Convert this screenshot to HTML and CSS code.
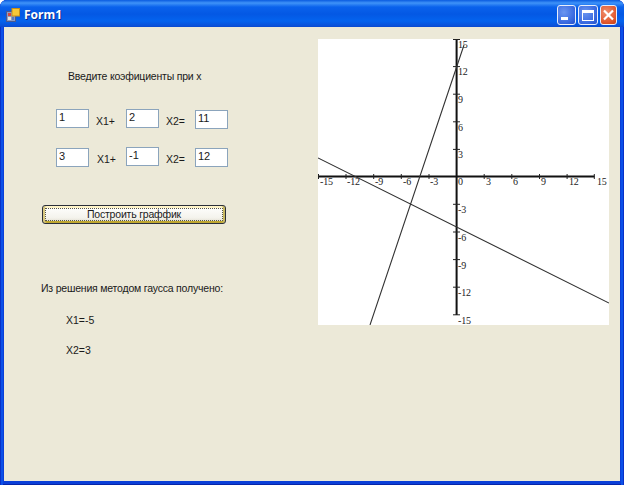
FILE: index.html
```html
<!DOCTYPE html>
<html lang="ru">
<head>
<meta charset="utf-8">
<title>Form1</title>
<link rel="stylesheet" href="styles.css">
</head>
<body>
<div class="window">
  <header class="titlebar">
    <svg class="app-icon" width="14" height="14" viewBox="0 0 14 14">
      <rect x="0.5" y="3.5" width="9" height="10" fill="#8c9cc4" stroke="#4a5a90"/>
      <rect x="2" y="5" width="3" height="3" fill="#d8463a"/>
      <rect x="2" y="9" width="3" height="3" fill="#e8e4d8"/>
      <rect x="6" y="9" width="2" height="3" fill="#5a7ac0"/>
      <rect x="6" y="0.5" width="7.5" height="7.5" fill="#f8c838" stroke="#c89018"/>
    </svg>
    <span class="title">Form1</span>
    <div class="caption-buttons">
      <button class="cap cap-min" aria-label="Свернуть">
        <svg width="19" height="20" viewBox="0 0 19 20"><rect x="4" y="12" width="7" height="3" fill="#fff"/></svg>
      </button>
      <button class="cap cap-max" aria-label="Развернуть">
        <svg width="20" height="20" viewBox="0 0 20 20"><rect x="4.5" y="5.5" width="11" height="10" fill="none" stroke="#fff"/><rect x="4" y="5" width="12" height="3" fill="#fff"/></svg>
      </button>
      <button class="cap cap-red" aria-label="Закрыть">
        <svg width="17" height="20" viewBox="0 0 17 20"><path d="M4 5.5 13 14.5M13 5.5 4 14.5" stroke="#fff" stroke-width="2.2" fill="none"/></svg>
      </button>
    </div>
  </header>
  <main class="client">
    <section class="form-pane">
      <p class="text prompt">Введите коэфициенты при х</p>
      <div class="eq eq-first">
        <input class="num" value="1" aria-label="a11">
        <span class="text term">X1+</span>
        <input class="num" value="2" aria-label="a12">
        <span class="text term">X2=</span>
        <input class="num nudge" value="11" aria-label="b1">
      </div>
      <div class="eq eq-second">
        <input class="num nudge" value="3" aria-label="a21">
        <span class="text term term-shift">X1+</span>
        <input class="num" value="-1" aria-label="a22">
        <span class="text term">X2=</span>
        <input class="num nudge" value="12" aria-label="b2">
      </div>
      <button class="plot"><span class="plot-inner">Построить граффик</span></button>
      <p class="text result-head">Из решения методом гаусса получено:</p>
      <p class="text root root-a">X1=-5</p>
      <p class="text root root-b">X2=3</p>
    </section>
    <svg class="chart" width="291" height="286" viewBox="318 39 291 286">
      <rect x="318" y="39" width="291" height="286" fill="#fff"/>
      <g class="axes">
        <path class="axis" d="M318 176.5H594.5M456.6 39V315"/>
        <path class="tick" d="M318.5 174V179M346 174V179M373.7 174V179M401.3 174V179M429 174V179M484.2 174V179M511.8 174V179M539.5 174V179M567.1 174V179M594.3 174V179"/>
        <path class="tick" d="M453 39.5H460M453 66.6H460M453 94.2H460M453 121.8H460M453 149.4H460M453 204.3H460M453 232H460M453 259.6H460M453 287.2H460M453 314.8H460"/>
      </g>
      <path class="plot-line" d="M370 325 464 45M318 158 609 303"/>
      <g class="labels">
        <text x="320" y="185">-15</text><text x="347" y="185">-12</text><text x="375" y="185">-9</text>
        <text x="403" y="185">-6</text><text x="430" y="185">-3</text><text x="458" y="185">0</text>
        <text x="486" y="185">3</text><text x="513" y="185">6</text><text x="541" y="185">9</text>
        <text x="569" y="185">12</text><text x="597" y="185">15</text>
        <text x="458" y="48">15</text><text x="458" y="75">12</text><text x="458" y="103">9</text>
        <text x="458" y="131">6</text><text x="458" y="158">3</text>
        <text x="458" y="213">-3</text><text x="458" y="241">-6</text><text x="458" y="269">-9</text>
        <text x="458" y="296">-12</text><text x="458" y="324">-15</text>
      </g>
    </svg>
  </main>
</div>
</body>
</html>
```

FILE: styles.css
```css
html, body { margin: 0; padding: 0; }
body { width: 624px; height: 485px; overflow: hidden; }

.window {
  width: 624px;
  height: 485px;
  display: flex;
  flex-direction: column;
  box-sizing: border-box;
  background: #0a3fd8;
  border-radius: 7px 7px 0 0;
  overflow: hidden;
  box-shadow: inset 1px 0 #0831c8, inset 3px 0 #0c50e8, inset -1px 0 #0831c8, inset -3px 0 #0c50e8, inset 0 -1px #0625a8;
}

.titlebar {
  height: 27px;
  flex: none;
  display: flex;
  align-items: center;
  padding: 3px 7px 0 6px;
  box-sizing: border-box;
  background: linear-gradient(#0a5be0 0, #3f93f8 3px, #0a62ec 7px, #0458e4 14px, #0463ee 21px, #0a50d8 26px, #0a48cc 27px);
}
.app-icon { flex: none; }
.title {
  margin-left: 4px;
  font: bold 12px/16px "Noto Sans", "Liberation Sans", sans-serif;
  color: #fff;
  text-shadow: 1px 1px #0a2c90;
}
.caption-buttons { margin-left: auto; display: flex; gap: 2px; }
.cap {
  padding: 0;
  border: 1px solid #e8eefc;
  border-radius: 3px;
  height: 20px;
  box-sizing: border-box;
  display: flex;
  align-items: center;
  justify-content: center;
}
.cap svg { display: block; flex: none; }
.cap-min { width: 19px; background: radial-gradient(circle at 35% 35%, #6c96f0, #3a6ae0 65%, #2450c8); }
.cap-max { width: 20px; background: radial-gradient(circle at 35% 35%, #6c96f0, #3a6ae0 65%, #2450c8); }
.cap-red { width: 17px; background: radial-gradient(circle at 35% 35%, #f09070, #e0582e 65%, #c03c14); }

.client {
  flex: 1;
  margin: 0 4px 4px;
  display: flex;
  align-items: flex-start;
  background: #ece9d8;
}

.form-pane {
  width: 314px;
  flex: none;
  display: flex;
  flex-direction: column;
  align-items: flex-start;
}

.text {
  margin: 0;
  font: 10.5px/14px "Liberation Sans", Arial, sans-serif;
  letter-spacing: -0.2px;
  color: #1a1a1a;
  white-space: nowrap;
}
.prompt { margin: 42px 0 0 64px; }

.eq {
  display: grid;
  grid-template-columns: 33px 37px 33px 36px 33px;
  align-items: start;
  margin-left: 52px;
}
.eq-first { margin-top: 26px; height: 19px; }
.eq-second { margin-top: 19px; height: 20px; }

.num {
  width: 33px;
  height: 19px;
  box-sizing: border-box;
  margin: 0;
  padding: 0 2px 3px;
  border: 1px solid #8ba4bc;
  border-radius: 0;
  background: #fff;
  outline: 0;
  font: 11px/14px "Liberation Sans", Arial, sans-serif;
  color: #1a1a1a;
}
.nudge { margin-top: 1px; }
.term { padding: 5px 0 0 7px; letter-spacing: 0; }
.term-shift { padding-left: 8px; }

.plot {
  margin: 38px 0 0 38px;
  width: 184px;
  height: 19px;
  padding: 0;
  box-sizing: border-box;
  border: 1px solid #2b2f3a;
  border-radius: 3px;
  background: linear-gradient(#fff, #f4f3ec 70%, #dcd8c8);
  box-shadow: inset 2px 0 #d8c880, inset -2px 0 #c8b860, inset 0 -2px #c0a830, inset 0 2px #fff4c8;
  display: flex;
}
.plot-inner {
  flex: 1;
  margin: 2px;
  border: 1px dotted #55554a;
  font: 10.5px/11px "Liberation Sans", Arial, sans-serif;
  letter-spacing: -0.2px;
  color: #1a1a1a;
  display: flex;
  align-items: center;
  justify-content: center;
}

.result-head { margin: 57px 0 0 37px; }
.root { letter-spacing: 0; }
.root-a { margin: 18px 0 0 62px; }
.root-b { margin: 16px 0 0 62px; }

.chart { display: block; flex: none; margin-top: 12px; }
.axis { stroke: #111; stroke-width: 2; fill: none; }
.tick { stroke: #222; stroke-width: 1; fill: none; }
.plot-line { stroke: #333; stroke-width: 1.1; fill: none; }
.labels text { font: 10px "Liberation Serif", "Times New Roman", serif; letter-spacing: -0.2px; fill: #222; }
```
